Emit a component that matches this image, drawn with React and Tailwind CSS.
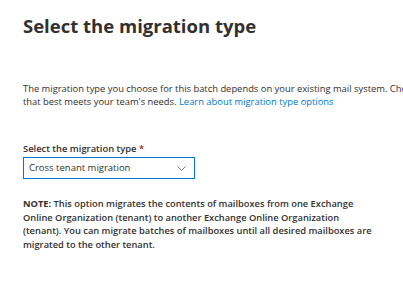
import React from 'react';

const ChevronDown = () => (
  <svg width="9" height="5" viewBox="0 0 9 5" fill="none">
    <path d="M0.4 0.4 L4.5 4.5 L8.6 0.4" stroke="#605e5c" strokeWidth="0.8" />
  </svg>
);

const App = () => {
  return (
    <div
      className="w-[403px] h-[300px] overflow-hidden bg-white text-[#323130]"
      style={{ fontFamily: '"Open Sans", "Noto Sans", sans-serif' }}
    >
      <div className="pl-[23px] pt-[14px] w-[480px]">
        {/* Title */}
        <h1 className="text-[18.5px] leading-[24px] font-bold text-[#323130]">Select the migration type</h1>

        {/* Description */}
        <p className="mt-[44px] w-[440px] text-[9.4px] leading-[13px] text-[#323130]">
          The migration type you choose for this batch depends on your existing mail system. Choose the one
          <br />
          that best meets your team's needs.{' '}
          <a className="text-[#0078d4]">Learn about migration type options</a>
        </p>

        {/* Select field */}
        <div className="mt-[34px]">
          <label className="block text-[9.4px] leading-[13px] font-semibold text-[#323130]">
            Select the migration type <span className="text-[#a4262c]">*</span>
          </label>
          <div className="mt-[2px] w-[172px] h-[22px] border border-[#0078d4] flex items-center justify-between pl-[5px] pr-[8px]">
            <span className="text-[9.5px] text-[#323130]">Cross tenant migration</span>
            <ChevronDown />
          </div>
        </div>

        {/* Note */}
        <p className="mt-[18px] w-[370px] text-[9.3px] leading-[13.7px] font-semibold text-[#323130]">
          <span className="font-bold">NOTE:</span> This option migrates the contents of mailboxes from one Exchange
          <br />
          Online Organization (tenant) to another Exchange Online Organization
          <br />
          (tenant). You can migrate batches of mailboxes until all desired mailboxes are
          <br />
          migrated to the other tenant.
        </p>
      </div>
    </div>
  );
};

export default App;
